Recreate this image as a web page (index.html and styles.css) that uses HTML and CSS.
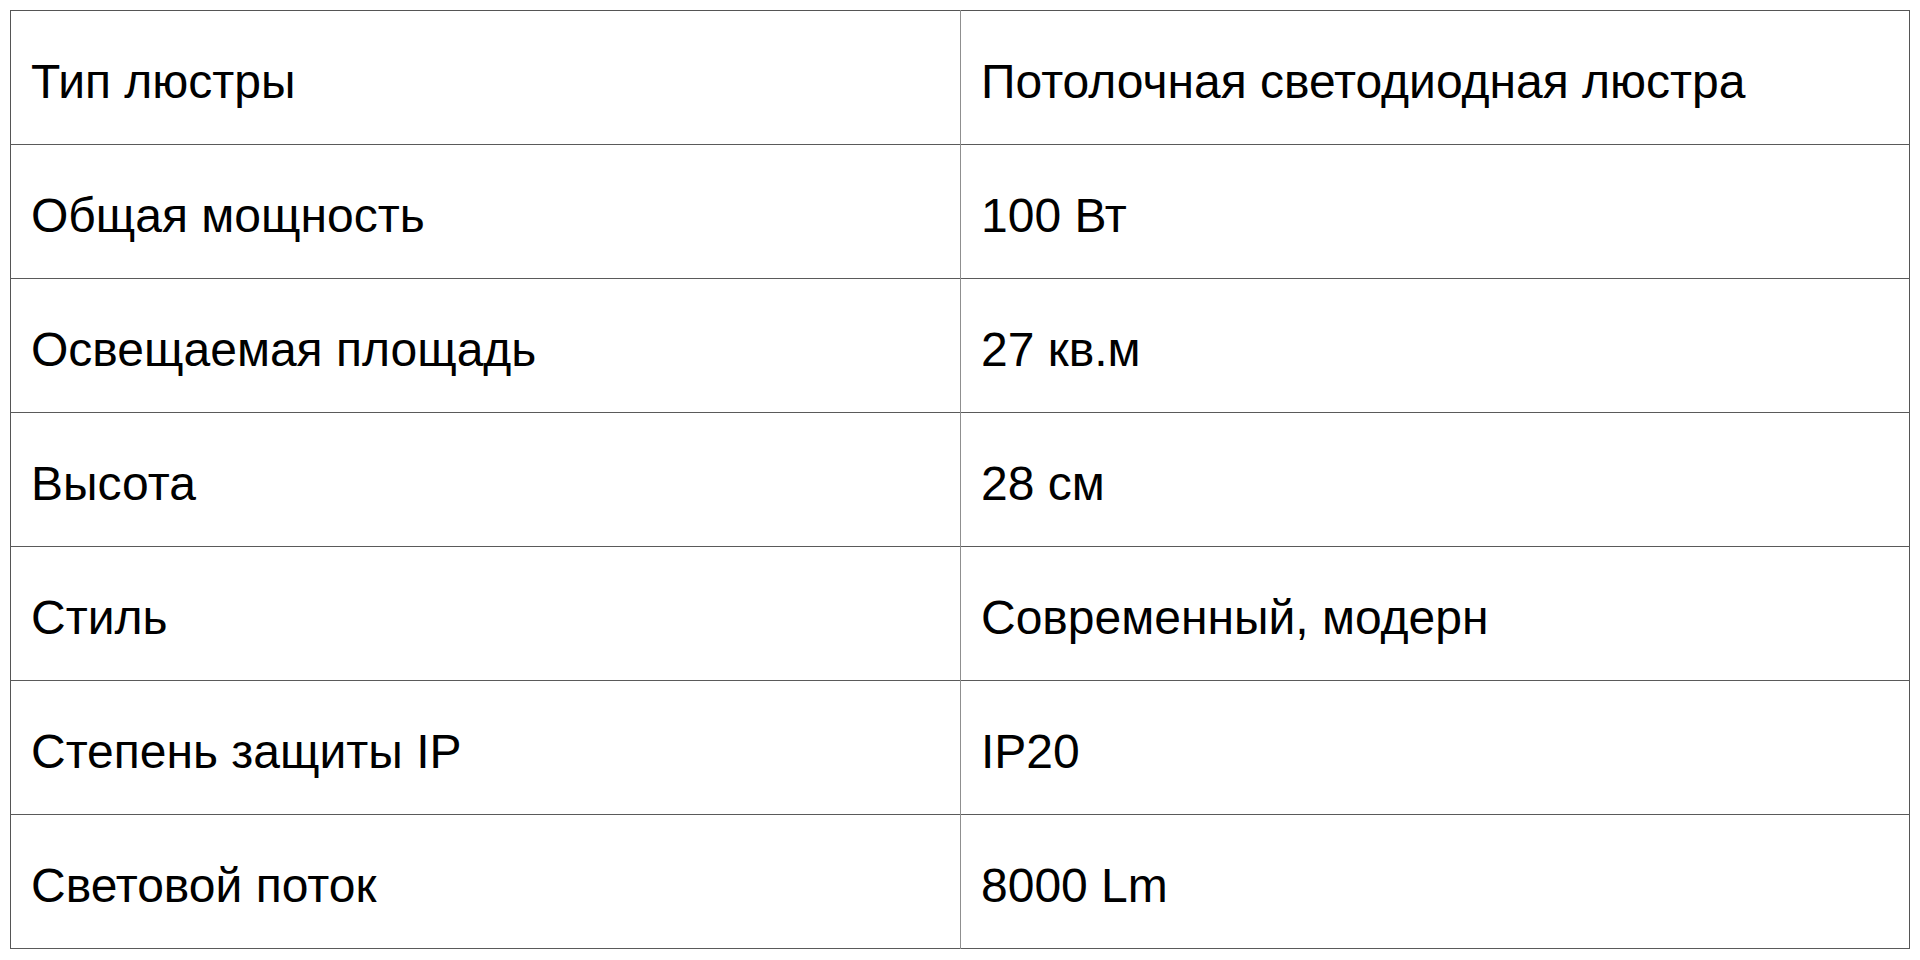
FILE: index.html
```html
<!DOCTYPE html>
<html lang="ru">
<head>
<meta charset="utf-8">
<link rel="stylesheet" href="styles.css">
</head>
<body>
<table class="specs">
  <tr><td class="name">Тип люстры</td><td class="value">Потолочная светодиодная люстра</td></tr>
  <tr><td class="name">Общая мощность</td><td class="value">100 Вт</td></tr>
  <tr><td class="name">Освещаемая площадь</td><td class="value">27 кв.м</td></tr>
  <tr><td class="name">Высота</td><td class="value">28 см</td></tr>
  <tr><td class="name">Стиль</td><td class="value">Современный, модерн</td></tr>
  <tr><td class="name">Степень защиты IP</td><td class="value">IP20</td></tr>
  <tr><td class="name">Световой поток</td><td class="value">8000 Lm</td></tr>
</table>
</body>
</html>
```
FILE: styles.css
```css
html, body {
  margin: 0;
  background: #ffffff;
}
body {
  padding: 10px;
  font-family: "Liberation Sans", Arial, sans-serif;
  color: #000000;
}
.specs {
  border-collapse: collapse;
  width: 1900px;
  table-layout: fixed;
  border: 1px solid #555555;
}
.specs tr {
  height: 134px;
  border-bottom: 1px solid #5a5a5a;
}
.specs td {
  padding: 8px 20px 0;
  font-size: 48px;
  vertical-align: middle;
  white-space: nowrap;
}
.name {
  width: 909px;
  border-right: 1px solid #8f8f8f;
}
```
